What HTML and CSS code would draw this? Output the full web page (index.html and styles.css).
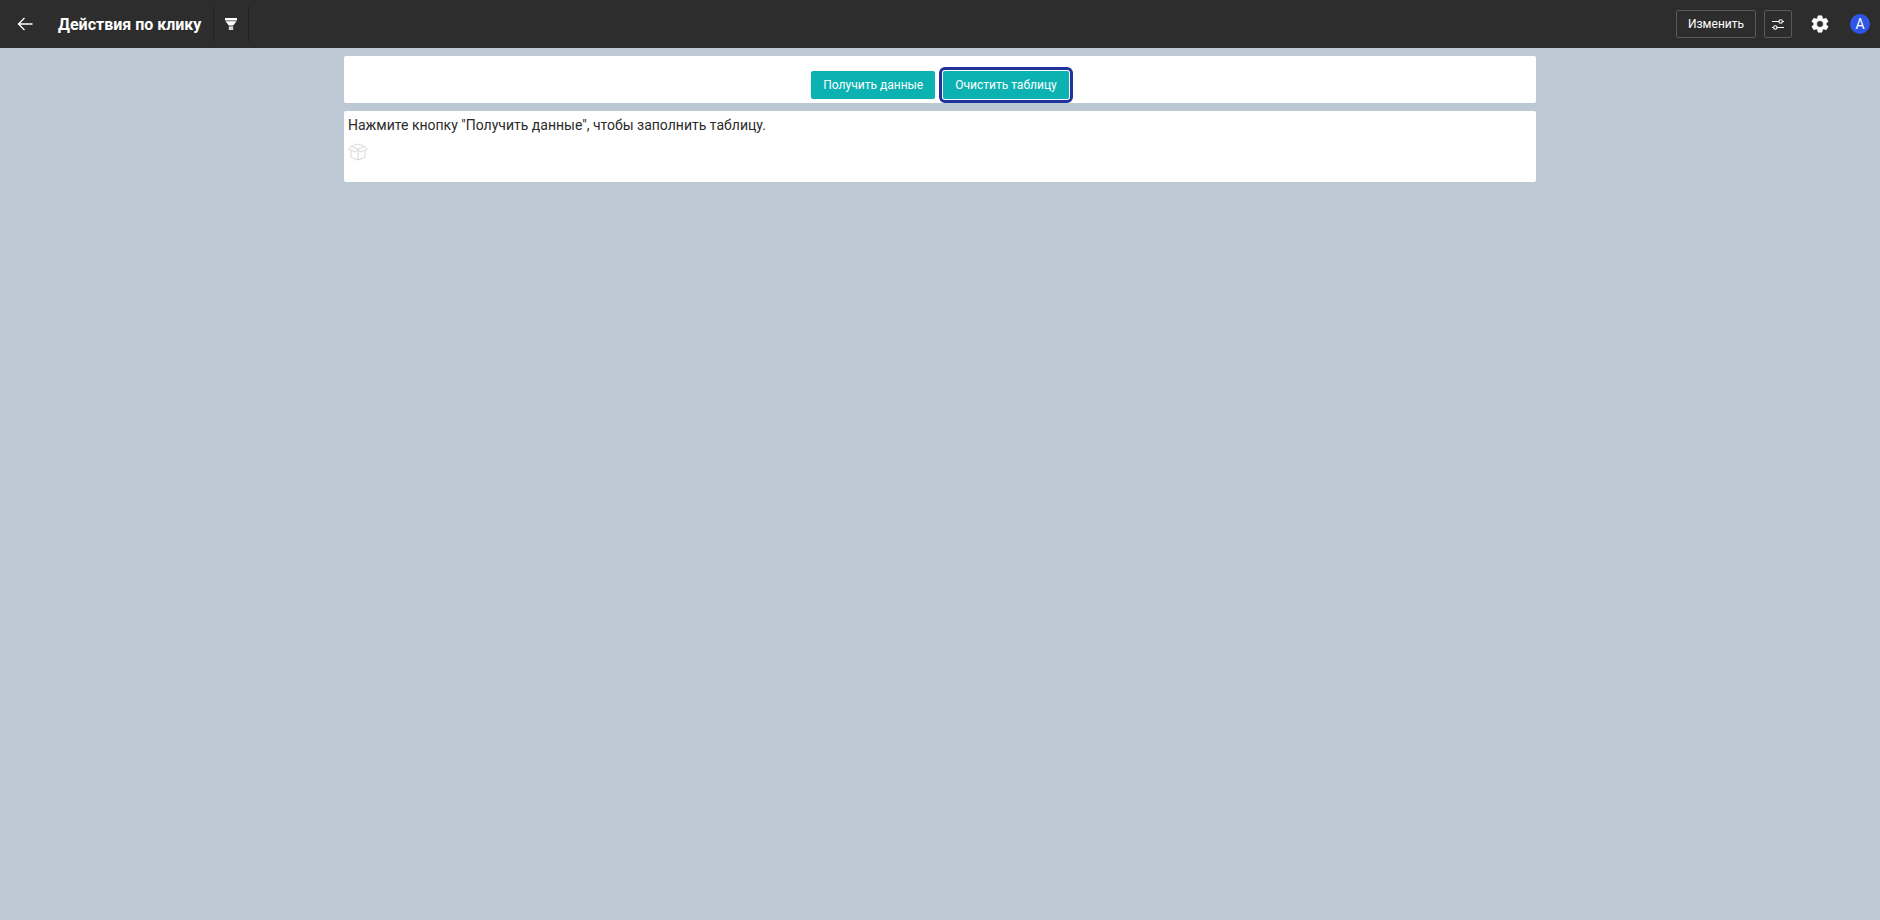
FILE: index.html
```html
<!DOCTYPE html>
<html lang="ru">
  <head>
    <meta charset="UTF-8" />
    <title>Действия по клику</title>
    <link rel="stylesheet" href="styles.css">
  </head>
  <body>
    <header class="topbar">
      <div class="topbar-left">
        <button class="back-btn" aria-label="Назад">
          <svg width="16" height="14" viewBox="0 0 16 14" fill="none" stroke="#fff" stroke-width="1.300">
            <path d="M15.500 7H1.500M7.500 1L1.500 7l6 6"/>
          </svg>
        </button>
        <h1 class="title">Действия по клику</h1>
        <div class="filter-box">
          <svg width="12" height="12" viewBox="0 0 12 12">
            <path fill="#fff" d="M0 0h12v2.500H0zM0.500 3.200h11L8.200 7.500H3.800z"/>
            <path fill="#d8d8d8" d="M3.800 8.300h4.400V12H3.800z"/>
          </svg>
        </div>
      </div>
      <div class="topbar-right">
        <button class="edit-btn">Изменить</button>
        <button class="tune-btn" aria-label="Настроить">
          <svg width="12" height="11" viewBox="0 0 12 11" fill="none" stroke="#fff" stroke-width="1.100">
            <path d="M0 2.500h7M10.500 2.500H12M0 8.500h1.500M5 8.500h7"/>
            <circle cx="8.700" cy="2.500" r="1.700"/>
            <circle cx="3.300" cy="8.500" r="1.700"/>
          </svg>
        </button>
        <svg class="gear" width="20" height="20" viewBox="0 0 24 24" fill="#fff" stroke="#fff" stroke-width="0.600">
          <path fill-rule="evenodd" d="M19.400 13c.05-.33.1-.66.1-1s-.05-.67-.1-1l2.100-1.650c.2-.15.25-.42.13-.64l-2-3.460c-.12-.22-.39-.3-.61-.22l-2.490 1c-.52-.4-1.080-.73-1.690-.98l-.38-2.650A.49.49 0 0 0 14 2h-4c-.25 0-.46.18-.49.42l-.38 2.650c-.61.25-1.170.59-1.690.98l-2.490-1c-.23-.09-.49 0-.61.22l-2 3.460c-.13.22-.07.49.12.64L4.570 11c-.04.33-.07.66-.07 1s.03.67.07 1l-2.110 1.650c-.19.15-.25.42-.12.64l2 3.460c.12.22.39.3.61.22l2.490-1c.52.4 1.080.73 1.690.98l.38 2.650c.03.24.24.42.49.42h4c.25 0 .46-.18.49-.42l.38-2.650c.61-.25 1.170-.59 1.690-.98l2.490 1c.23.09.49 0 .61-.22l2-3.460c.12-.22.07-.49-.12-.64L19.400 13zM12 8a4 4 0 1 1 0 8 4 4 0 0 1 0-8z"/>
        </svg>
        <div class="avatar">A</div>
      </div>
    </header>

    <main class="content">
      <section class="panel panel-actions">
        <button class="action-btn">Получить данные</button>
        <button class="action-btn focused">Очистить таблицу</button>
      </section>
      <section class="panel panel-table">
        <p class="hint">Нажмите кнопку "Получить данные", чтобы заполнить таблицу.</p>
        <svg class="empty-icon" width="20" height="18" viewBox="0 0 20 18" fill="none" stroke="#d8d8d8" stroke-width="1">
          <path d="M10 1L17 3.500 10 6 3 3.500zM3 3.500L1 6.500 8 9 10 6 12 9 19 6.500 17 3.500M3 8v6.500L10 17l7-2.500V8M10 6v11"/>
        </svg>
      </section>
    </main>
  </body>
</html>
```

FILE: styles.css
```css
* {
  box-sizing: border-box;
}

body {
  margin: 0;
  height: 920px;
  overflow: hidden;
  background-color: #bcc8d4;
  font-family: Roboto, sans-serif;
  color: #2b2b2b;
}

button {
  font-family: inherit;
  cursor: pointer;
}

.topbar {
  height: 48px;
  background-color: #2d2d2d;
  display: flex;
  justify-content: space-between;
  align-items: center;
}

.topbar-left,
.topbar-right {
  display: flex;
  align-items: center;
}

.back-btn {
  width: 50px;
  height: 48px;
  padding: 0;
  border: none;
  background: transparent;
  display: flex;
  align-items: center;
  justify-content: center;
}

.title {
  margin: 0 0 0 8px;
  padding-right: 12px;
  font-size: 16px;
  font-weight: 700;
  color: #fff;
}

.filter-box {
  width: 36px;
  height: 36px;
  border-left: 1px solid #222;
  border-right: 1px solid #222;
  display: flex;
  align-items: center;
  justify-content: center;
}

.topbar-right {
  padding-right: 10px;
}

.edit-btn {
  width: 80px;
  height: 28px;
  padding: 0;
  border: 1px solid #5a5a5a;
  border-radius: 2px;
  background: transparent;
  color: #fff;
  font-size: 12px;
}

.tune-btn {
  width: 28px;
  height: 28px;
  margin-left: 8px;
  padding: 0;
  border: 1px solid #5a5a5a;
  border-radius: 2px;
  background: transparent;
  display: flex;
  align-items: center;
  justify-content: center;
}

.gear {
  margin-left: 18px;
}

.avatar {
  width: 20px;
  height: 20px;
  margin-left: 20px;
  border-radius: 50%;
  background-color: #2f55e6;
  color: #fff;
  font-size: 14px;
  line-height: 20px;
  text-align: center;
}

.content {
  width: 1192px;
  margin: 8px auto 0;
  display: flex;
  flex-direction: column;
  gap: 8px;
}

.panel {
  background-color: #fff;
  border-radius: 2px;
}

.panel-actions {
  height: 47px;
  padding-top: 15px;
  display: flex;
  justify-content: center;
  gap: 8px;
}

.action-btn {
  height: 28px;
  padding: 0 12px;
  border: none;
  border-radius: 2px;
  background-color: #0cb2b2;
  color: #fff;
  font-size: 12px;
}

.action-btn.focused {
  outline: 3px solid #20339a;
  outline-offset: 1px;
}

.panel-table {
  height: 71px;
  padding: 6px 4px;
}

.hint {
  margin: 0;
  font-size: 14px;
  line-height: 16px;
}

.empty-icon {
  display: block;
  margin-top: 10px;
}
```
